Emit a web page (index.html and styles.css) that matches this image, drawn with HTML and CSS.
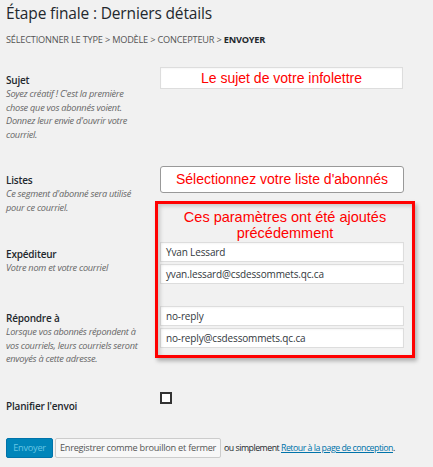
FILE: index.html
```html
<!DOCTYPE html>
<html lang="fr">
<head>
<meta charset="utf-8">
<title>Étape finale</title>
<link rel="stylesheet" href="styles.css">
</head>
<body>
<div class="page">
  <h1 class="title">Étape finale : Derniers détails</h1>
  <div class="crumbs">Sélectionner le type &gt; Modèle &gt; Concepteur &gt; <b>Envoyer</b></div>

  <div class="row row-sujet">
    <div class="label">
      <div class="name">Sujet</div>
      <div class="desc">Soyez créatif ! C'est la première chose que vos abonnés voient. Donnez leur envie d'ouvrir votre courriel.</div>
    </div>
    <div class="field">
      <div class="input note">Le sujet de votre infolettre</div>
    </div>
  </div>

  <div class="row row-listes">
    <div class="label">
      <div class="name">Listes</div>
      <div class="desc">Ce segment d'abonné sera utilisé pour ce courriel.</div>
    </div>
    <div class="field">
      <div class="select note">Sélectionnez votre liste d'abonnés</div>
    </div>
  </div>

  <div class="annotated">
    <div class="row row-exp">
      <div class="label">
        <div class="name">Expéditeur</div>
        <div class="desc">Votre nom et votre courriel</div>
      </div>
      <div class="field stack">
        <div class="input">Yvan Lessard</div>
        <div class="input">yvan.lessard@csdessommets.qc.ca</div>
      </div>
    </div>

    <div class="row row-rep">
      <div class="label">
        <div class="name">Répondre à</div>
        <div class="desc">Lorsque vos abonnés répondent à vos courriels, leurs courriels seront envoyés à cette adresse.</div>
      </div>
      <div class="field stack">
        <div class="input">no-reply</div>
        <div class="input">no-reply@csdessommets.qc.ca</div>
      </div>
    </div>

    <div class="callout">Ces paramètres ont été ajoutés<br>précédemment</div>
  </div>

  <div class="row row-plan">
    <div class="label">
      <div class="name">Planifier l'envoi</div>
    </div>
    <div class="field">
      <span class="checkbox"></span>
    </div>
  </div>

  <div class="actions">
    <span class="btn primary">Envoyer</span>
    <span class="btn secondary">Enregistrer comme brouillon et fermer</span>
    <span class="or">ou simplement <a href="#">Retour à la page de conception</a>.</span>
  </div>
</div>
</body>
</html>
```

FILE: styles.css
```css
html, body {
  margin: 0;
  padding: 0;
  background: #f1f1f1;
}
body {
  font-family: "Open Sans", "Noto Sans", sans-serif;
  color: #23282d;
  font-size: 10px;
}
.page {
  width: 433px;
  height: 467px;
  padding: 0 0 0 6px;
  box-sizing: border-box;
  overflow: hidden;
}
.title {
  margin: 0;
  padding-top: 2px;
  font-weight: 400;
  font-size: 15.5px;
  line-height: 23px;
  letter-spacing: -0.15px;
  color: #23282d;
}
.crumbs {
  margin-top: 8px;
  font-size: 9.2px;
  line-height: 14px;
  text-transform: uppercase;
  letter-spacing: -0.2px;
  color: #555;
}
.crumbs b {
  color: #23282d;
  font-weight: 700;
}
.row {
  display: flex;
}
.label {
  width: 154px;
  flex: none;
}
.name {
  font-size: 10px;
  font-weight: 600;
  line-height: 14px;
  letter-spacing: -0.2px;
  color: #23282d;
}
.desc {
  width: 140px;
  font-size: 9.2px;
  font-style: italic;
  line-height: 13.5px;
  letter-spacing: -0.25px;
  color: #666;
}
.field {
  width: 244px;
  flex: none;
}
.stack {
  display: flex;
  flex-direction: column;
  gap: 2px;
}
.input {
  height: 20px;
  box-sizing: border-box;
  background: #fff;
  border: 1px solid #ddd;
  padding: 0 5px;
  font-size: 10px;
  line-height: 18px;
  letter-spacing: -0.15px;
  color: #32373c;
  box-shadow: inset 0 1px 2px rgba(0,0,0,.04);
}
.note {
  font-family: "Liberation Sans", Arial, sans-serif;
  color: #ff0000;
  text-align: center;
  font-size: 14px;
  letter-spacing: 0;
}
.row-sujet { margin-top: 20px; }
.row-sujet .label { padding-top: 6px; }
.row-sujet .input {
  height: 22px;
  line-height: 20px;
  width: 243px;
}
.row-listes { margin-top: 25px; }
.row-listes .label { padding-top: 7px; }
.select {
  height: 27px;
  width: 244px;
  box-sizing: border-box;
  background: #fff;
  border: 1px solid #999;
  border-radius: 3px;
  line-height: 24px;
}
.annotated {
  position: relative;
  padding-top: 28px;
}
.row-exp .label { padding-top: 5px; }
.row-rep { margin-top: 22px; }
.row-rep .label { padding-top: 5px; }
.callout {
  position: absolute;
  left: 149px;
  top: -13px;
  width: 254px;
  height: 146px;
  border: 3px solid #ff0000;
  box-shadow: 2px 3px 4px rgba(0,0,0,.28), inset 2px 2px 4px rgba(0,0,0,.18);
  font-family: "Liberation Sans", Arial, sans-serif;
  font-size: 14.5px;
  line-height: 16px;
  color: #ff0000;
  text-align: center;
  padding-top: 5px;
  box-sizing: content-box;
  pointer-events: none;
}
.row-plan { margin-top: 26px; }
.row-plan .label { padding-top: 7px; }
.checkbox {
  display: block;
  width: 12px;
  height: 12px;
  box-sizing: border-box;
  border: 2px solid #333;
  background: #fff;
}
.actions {
  margin-top: 25px;
  display: flex;
  align-items: center;
  gap: 2px;
  white-space: nowrap;
}
.btn {
  height: 20px;
  box-sizing: border-box;
  border-radius: 2px;
  font-size: 9.2px;
  line-height: 18px;
  padding: 0 8px;
  letter-spacing: -0.25px;
  white-space: nowrap;
}
.primary {
  width: 47px;
  padding: 0;
  text-align: center;
  background: #0085ba;
  border: 1px solid #0073aa;
  color: #66c6e4;
}
.secondary {
  width: 166px;
  padding: 0;
  text-align: center;
  background: #f7f7f7;
  border: 1px solid #ccc;
  color: #555;
}
.or {
  margin-left: 1px;
  font-size: 8.8px;
  letter-spacing: -0.5px;
  color: #23282d;
}
.or a {
  color: #0073aa;
}
```
